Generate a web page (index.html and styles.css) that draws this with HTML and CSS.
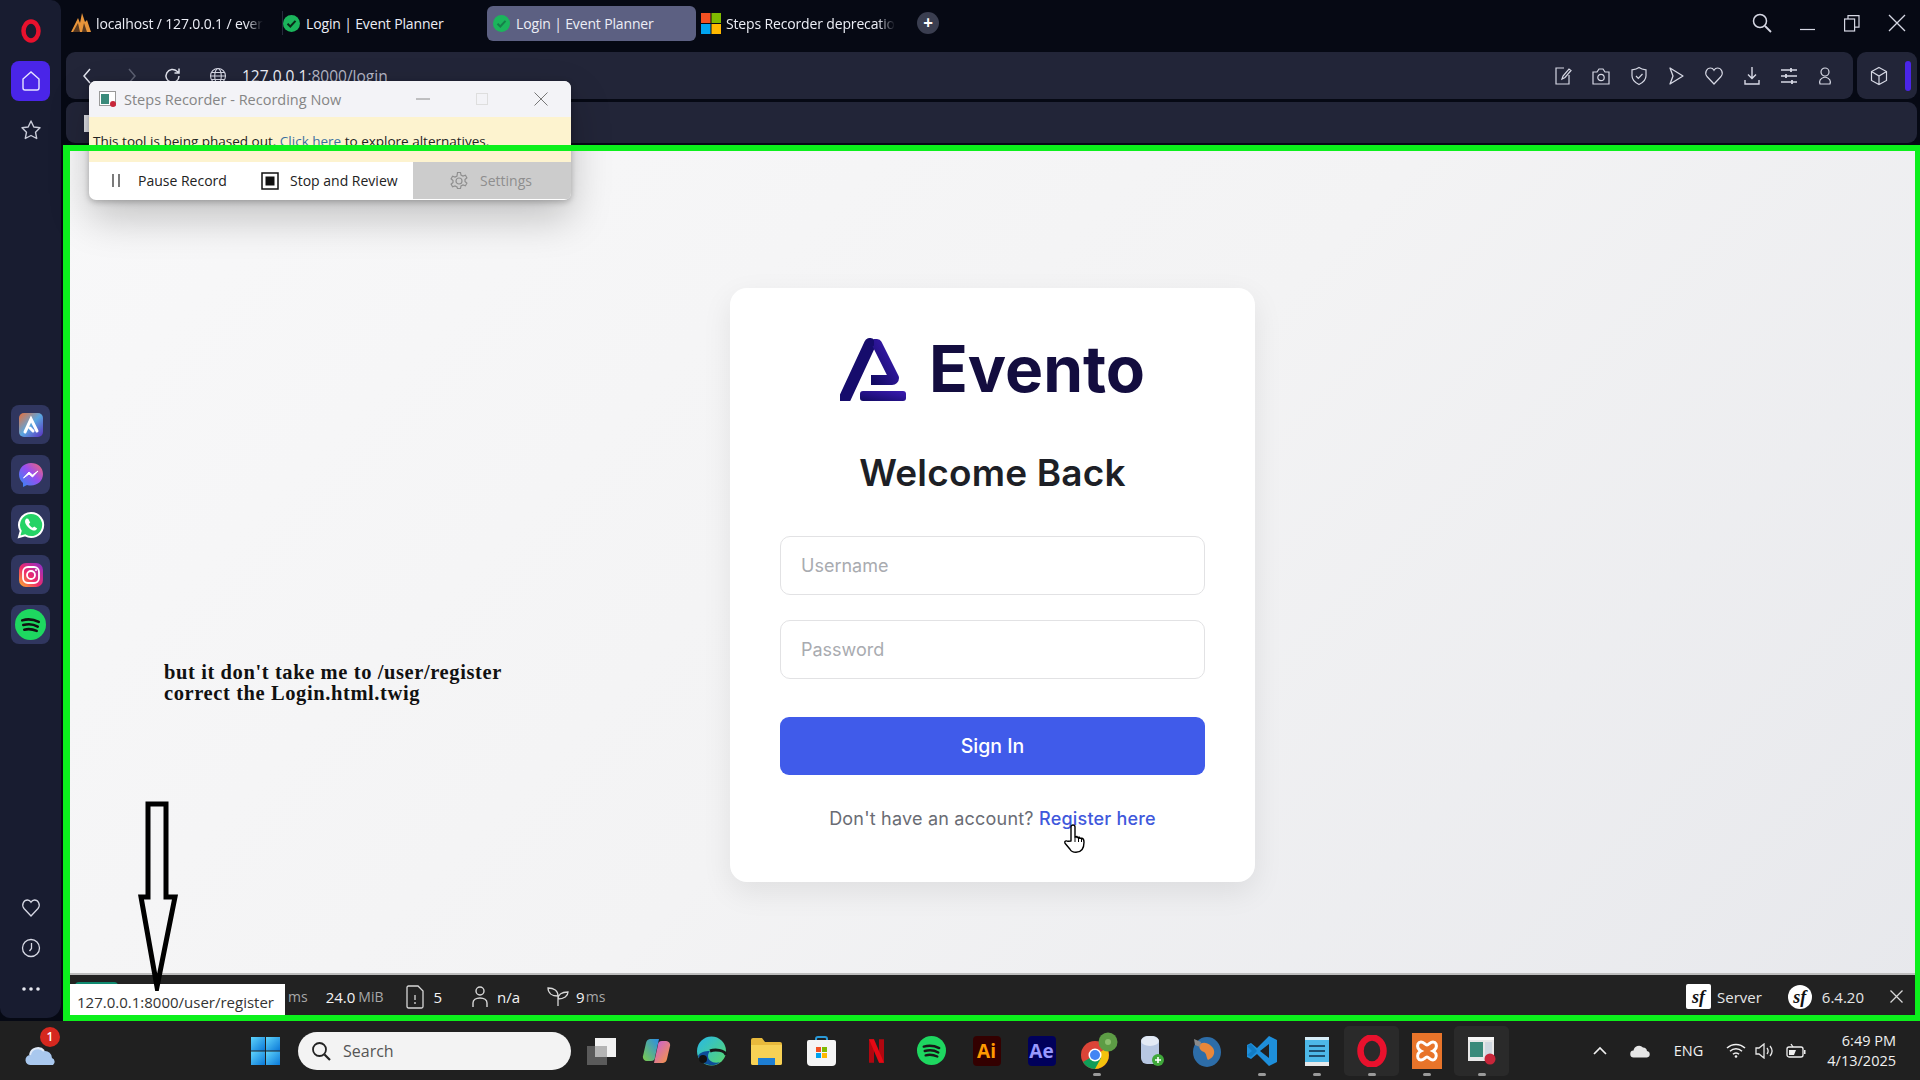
FILE: index.html
```
<!DOCTYPE html>
<html lang="en">
<head>
    <meta charset="UTF-8">
    <meta name="viewport" content="width=device-width, initial-scale=1.0">
    <title>Login | Event Planner</title>
    <link rel="stylesheet" href="styles.css">
</head>
<body>
<div class="screen">
    <div class="browser">
        <!-- opera sidebar -->
        <aside class="sidebar">
            <svg class="opera-logo" width="20" height="24" viewBox="0 0 20 24"><ellipse cx="10" cy="12" rx="7.5" ry="9.5" fill="none" stroke="#e8112d" stroke-width="4.5"/></svg>
            <div class="home-btn"><svg width="20" height="22" viewBox="0 0 20 22"><path d="M2 9 10 2l8 7v9a2 2 0 0 1-2 2H4a2 2 0 0 1-2-2z" fill="none" stroke="#e6e4ff" stroke-width="1.4"/></svg></div>
            <svg class="side-star" width="22" height="22" viewBox="0 0 22 22"><path d="M11 2l2.8 6 6.2.8-4.5 4.4 1.2 6.3L11 16.500 5.300 19.500l1.200-6.300L2 8.800 8.200 8z" fill="none" stroke="#c9cbd8" stroke-width="1.4" stroke-linejoin="round"/></svg>

            <div class="side-apps">
                <div class="app-tile">
                    <svg width="24" height="24" viewBox="0 0 24 24"><defs><linearGradient id="ariaG" x1="0" y1="0" x2="1" y2="1"><stop offset="0" stop-color="#e8703a"/><stop offset=".5" stop-color="#5aa7e0"/><stop offset="1" stop-color="#5a2fc0"/></linearGradient></defs><rect width="24" height="24" rx="5" fill="url(#ariaG)"/><path d="M6 19 12 6l6 12M11 15l3 3" fill="none" stroke="#fff" stroke-width="3" stroke-linecap="round"/></svg>
                </div>
                <div class="app-tile">
                    <svg width="28" height="28" viewBox="0 0 28 28"><defs><linearGradient id="msgG" x1="0" y1="1" x2="1" y2="0"><stop offset="0" stop-color="#2a8cf5"/><stop offset=".55" stop-color="#9a4df0"/><stop offset="1" stop-color="#f76a6a"/></linearGradient></defs><path d="M14 2C7 2 2 7 2 13.500c0 3.500 1.500 6.500 4 8.500v4l4-2c1.300.4 2.600.5 4 .5 7 0 12-5 12-11.500S21 2 14 2z" fill="url(#msgG)"/><path d="M6.500 17 12 11l3.500 3L21 10l-5.500 6-3.500-3z" fill="#fff" stroke="#fff" stroke-linejoin="round"/></svg>
                </div>
                <div class="app-tile">
                    <svg width="30" height="30" viewBox="0 0 30 30"><path d="M15 3a12 12 0 0 0-10.300 18L3 27l6.200-1.600A12 12 0 1 0 15 3z" fill="#25d366" stroke="#fff" stroke-width="2"/><path d="M10.500 8.500c-1.500 1-2 3-.8 5.500 1.500 3 4 5.200 6.800 6.300 2.200.8 4-.2 4.700-1.800l-3-2-1.500 1.300c-1.500-.7-3-2.200-3.800-3.800l1.300-1.500-2-3.800z" fill="#fff"/></svg>
                </div>
                <div class="app-tile">
                    <svg width="26" height="26" viewBox="0 0 26 26"><defs><linearGradient id="igG" x1="0" y1="1" x2="1" y2="0"><stop offset="0" stop-color="#fdb52c"/><stop offset=".45" stop-color="#ee2a6b"/><stop offset="1" stop-color="#8a2fd0"/></linearGradient></defs><rect x="1" y="1" width="24" height="24" rx="7" fill="url(#igG)"/><rect x="5" y="5" width="16" height="16" rx="5" fill="none" stroke="#fff" stroke-width="1.800"/><circle cx="13" cy="13" r="4" fill="none" stroke="#fff" stroke-width="1.800"/><circle cx="18" cy="8" r="1" fill="#fff"/></svg>
                </div>
                <div class="app-tile">
                    <svg width="31" height="31" viewBox="0 0 30 30"><circle cx="15" cy="15" r="15" fill="#1ed760"/><path d="M7 11c5-1.500 11-1 16 1.500M8 15.500c4.500-1.200 10-.8 14 1.500M9 20c4-1 8-.6 12 1.200" fill="none" stroke="#111" stroke-width="2.500" stroke-linecap="round"/></svg>
                </div>
            </div>

            <div class="side-bottom">
                <svg width="20" height="20" viewBox="0 0 20 20"><path d="M10 18 3 10.500C0 6.500 3 2 6.500 2 8 2 9.300 3 10 4.200 10.700 3 12 2 13.500 2 17 2 20 6.500 17 10.500z" fill="none" stroke="#d6d8e4" stroke-width="1.300"/></svg>
                <svg width="20" height="20" viewBox="0 0 20 20"><circle cx="10" cy="10" r="8.500" fill="none" stroke="#d6d8e4" stroke-width="1.300"/><path d="M10.500 5v5.500L8.500 13" fill="none" stroke="#d6d8e4" stroke-width="1.300"/></svg>
                <svg class="side-dots" width="18" height="4" viewBox="0 0 18 4"><circle cx="2" cy="2" r="1.800" fill="#e6e8f0"/><circle cx="9" cy="2" r="1.800" fill="#e6e8f0"/><circle cx="16" cy="2" r="1.800" fill="#e6e8f0"/></svg>
            </div>
        </aside>

        <div class="main">
            <div class="tabstrip">
                <div class="tab tab-pma">
                    <svg width="22" height="22" viewBox="0 0 22 22"><path d="M1 20 8 6l2 5 2-10 3 9 2-2 4 12z" fill="#e8953a"/><path d="M3 20 8 11l2 9zM12 20l2-9 3 9z" fill="#5a3a20"/></svg>
                    <span class="tab-text tab-fade">localhost / 127.0.0.1 / ever</span>
                </div>
                <div class="tab tab-login">
                    <svg width="17" height="17" viewBox="0 0 17 17"><circle cx="8.500" cy="8.500" r="8.500" fill="#1bb55c"/><path d="M4.500 8.800 7.300 11.500 12.500 5.800" fill="none" stroke="#0a2a18" stroke-width="2"/></svg>
                    <span class="tab-text">Login | Event Planner</span>
                </div>
                <div class="tab tab-active">
                    <svg width="17" height="17" viewBox="0 0 17 17"><circle cx="8.500" cy="8.500" r="8.500" fill="#1bb55c"/><path d="M4.500 8.800 7.300 11.500 12.500 5.800" fill="none" stroke="#16804a" stroke-width="2"/></svg>
                    <span class="tab-text">Login | Event Planner</span>
                </div>
                <div class="tab tab-steps">
                    <svg width="20" height="21" viewBox="0 0 20 21"><rect width="9.500" height="10" fill="#f25022"/><rect x="10.500" width="9.500" height="10" fill="#7fba00"/><rect y="11" width="9.500" height="10" fill="#00a4ef"/><rect x="10.500" y="11" width="9.500" height="10" fill="#ffb900"/></svg>
                    <span class="tab-text tab-fade">Steps Recorder deprecatio</span>
                </div>
                <div class="tab-add">+</div>
                <div class="win-controls">
                    <svg width="20" height="20" viewBox="0 0 20 20"><circle cx="8" cy="8" r="6.500" fill="none" stroke="#d6d8e4" stroke-width="1.500"/><path d="M13 13l6 6" stroke="#d6d8e4" stroke-width="1.800"/></svg>
                    <svg width="16" height="16" viewBox="0 0 16 16"><path d="M0 14.500h15" stroke="#d6d8e4" stroke-width="1.200"/></svg>
                    <svg width="16" height="17" viewBox="0 0 16 17"><rect x=".6" y="4" width="10" height="12" fill="none" stroke="#d6d8e4" stroke-width="1.200"/><path d="M4 4V.7h11v11.500h-4" fill="none" stroke="#d6d8e4" stroke-width="1.200"/></svg>
                    <svg width="18" height="18" viewBox="0 0 18 18"><path d="M1 1l16 16M17 1 1 17" stroke="#d6d8e4" stroke-width="1.300"/></svg>
                </div>
            </div>

            <div class="address-row">
                <div class="address-bar">
                    <svg class="nav-back" width="10" height="16" viewBox="0 0 10 16"><path d="M8 1 2 8l6 7" fill="none" stroke="#e0e2ec" stroke-width="1.500"/></svg>
                    <svg class="nav-fwd" width="10" height="16" viewBox="0 0 10 16"><path d="M2 1l6 7-6 7" fill="none" stroke="#5c6072" stroke-width="1.500"/></svg>
                    <svg class="nav-reload" width="18" height="18" viewBox="0 0 18 18"><path d="M15 9a6.500 6.500 0 1 1-2-4.700L15 6M15 1.500V6h-4.500" fill="none" stroke="#e0e2ec" stroke-width="1.500"/></svg>
                    <svg class="nav-globe" width="18" height="18" viewBox="0 0 18 18"><g fill="none" stroke="#d6d8e4" stroke-width="1.100"><circle cx="9" cy="9" r="7.500"/><ellipse cx="9" cy="9" rx="3.300" ry="7.500"/><path d="M1.500 9h15M2.500 5.500h13M2.500 12.500h13"/></g></svg>
                    <span class="url"><b>127.0.0.1</b>:8000/login</span>
                    <div class="addr-tools">
                        <svg width="18" height="20" viewBox="0 0 18 20"><path d="M10 2H2v16h13V9M8 13l1-3 6-7 2 1.500-6 7z" fill="none" stroke="#d6d8e4" stroke-width="1.200"/></svg>
                        <svg width="20" height="20" viewBox="0 0 20 20"><path d="M2 6h4l2-3h4l2 3h4v12H2z" fill="none" stroke="#d6d8e4" stroke-width="1.200"/><circle cx="10" cy="11.500" r="3.200" fill="none" stroke="#d6d8e4" stroke-width="1.200"/></svg>
                        <svg width="18" height="20" viewBox="0 0 18 20"><path d="M9 1.500c2 1.500 4 2 7 2.300v6c0 4-3 6.800-7 8.700-4-1.900-7-4.700-7-8.700v-6c3-.3 5-.8 7-2.300z" fill="none" stroke="#d6d8e4" stroke-width="1.200"/><path d="M6 10l2.300 2.300L12.500 8" fill="none" stroke="#d6d8e4" stroke-width="1.200"/></svg>
                        <svg width="18" height="20" viewBox="0 0 18 20"><path d="M3 2l13 8-13 8 3-8z" fill="none" stroke="#d6d8e4" stroke-width="1.300" stroke-linejoin="round"/></svg>
                        <svg width="20" height="20" viewBox="0 0 20 20"><path d="M10 18 3 10.500C0 6.500 3 2 6.500 2 8 2 9.300 3 10 4.200 10.700 3 12 2 13.500 2 17 2 20 6.500 17 10.500z" fill="none" stroke="#d6d8e4" stroke-width="1.200"/></svg>
                        <svg width="18" height="20" viewBox="0 0 18 20"><path d="M9 1v11M5 8.500 9 12.500l4-4M2 14v4h14v-4" fill="none" stroke="#d6d8e4" stroke-width="1.400"/></svg>
                        <svg width="18" height="18" viewBox="0 0 18 18"><path d="M1 3h16M1 9h16M1 15h16" stroke="#d6d8e4" stroke-width="1.300"/><path d="M11 1v4M6 7v4M12 13v4" stroke="#d6d8e4" stroke-width="1.800"/></svg>
                        <svg width="16" height="20" viewBox="0 0 16 20"><circle cx="8" cy="6" r="4" fill="none" stroke="#d6d8e4" stroke-width="1.200"/><path d="M3 18c-1-3 0-6 5-7 5 1 6 4 5 7z" fill="none" stroke="#d6d8e4" stroke-width="1.200"/></svg>
                    </div>
                </div>
                <div class="ext-box">
                    <svg width="18" height="20" viewBox="0 0 18 20"><path d="M9 1.500 16.500 5.500v9L9 18.500 1.500 14.500v-9zM1.500 5.500 9 10l7.500-4.500M9 10v8.500" fill="none" stroke="#d6d8e4" stroke-width="1.200"/></svg>
                    <span class="ext-bar"></span>
                </div>
            </div>

            <div class="bookmarks"><span class="bookmark-stub"></span></div>

            <div class="viewport">
                <div class="viewport-inner">
                    <div class="page">
                        <div class="card">
                            <div class="logo">
                                <svg width="66" height="63" viewBox="0 0 66 63">
                                    <defs><linearGradient id="logoG" x1="0" y1="1" x2="1" y2="0"><stop offset="0" stop-color="#120a62"/><stop offset="1" stop-color="#3b1bb3"/></linearGradient></defs>
                                    <path d="M5 60 30 6" fill="none" stroke="#160c6c" stroke-width="12" stroke-linecap="round"/>
                                    <path d="M34 6h3l17 34a2 2 0 0 1-2 2H31" fill="none" stroke="url(#logoG)" stroke-width="10" stroke-linejoin="round"/>
                                    <rect x="20" y="53" width="46" height="10" rx="3" fill="url(#logoG)"/>
                                </svg>
                                <span class="logo-name">Evento</span>
                            </div>
                            <h1 class="card-title">Welcome Back</h1>
                            <form class="login-form">
                                <input class="field" type="text" placeholder="Username">
                                <input class="field" type="password" placeholder="Password">
                                <button class="submit" type="button">Sign In</button>
                            </form>
                            <p class="register">Don't have an account? <a href="#">Register here</a></p>
                        </div>
                    </div>

                    <p class="note">but it don't take me to /user/register<br>correct the Login.html.twig</p>

                    <svg class="arrow" width="40" height="190" viewBox="0 0 40 190"><path d="M10 3h18v93h9L19 186 3 96h7z" fill="none" stroke="#000" stroke-width="5" stroke-miterlimit="10"/></svg>

                    <svg class="hand-cursor" width="24" height="30" viewBox="0 0 24 30"><path d="M8 17V3a2 2 0 0 1 4 0v10l2-.5 0 1 2.500-.2 0 1 2.500 0c2 .500 2 2 2 4 0 5-1 10-8 10-3 0-5-1-6-3l-5-6c-1-2 1-3 3-2z" fill="#fff" stroke="#000" stroke-width="1.400" stroke-linejoin="round"/><path d="M12 13v5M15.500 14v4M18.500 15v3" stroke="#000" stroke-width="1"/></svg>

                    <div class="sf-toolbar">
                        <span class="sf-tab"></span>
                        <span class="sf-item sf-ms"><small>ms</small></span>
                        <span class="sf-item sf-mem">24.0<small>MiB</small></span>
                        <span class="sf-item">
                            <svg width="18" height="24" viewBox="0 0 18 24"><path d="M1 2.500A1.500 1.500 0 0 1 2.500 1H12l5 5v15.500a1.500 1.500 0 0 1-1.500 1.500h-13A1.500 1.500 0 0 1 1 21.500z" fill="none" stroke="#d8d8d8" stroke-width="1.300"/><path d="M9 10v5M9 17v2" stroke="#d8d8d8" stroke-width="1.300"/></svg>
                            5
                        </span>
                        <span class="sf-item sf-user">
                            <svg width="16" height="22" viewBox="0 0 16 22"><circle cx="8" cy="5" r="4" fill="none" stroke="#d8d8d8" stroke-width="1.400"/><path d="M1 21v-4c0-3 3-5 7-5s7 2 7 5v4" fill="none" stroke="#d8d8d8" stroke-width="1.400"/></svg>
                            n/a
                        </span>
                        <span class="sf-item sf-time">
                            <svg width="22" height="20" viewBox="0 0 22 20"><path d="M11 19V9M11 9C11 4 7 1 1 1c0 5 4 8 10 8zM11 12c0-4 3-7 10-7 0 4-4 7-10 7z" fill="none" stroke="#d8d8d8" stroke-width="1.300"/></svg>
                            9<small>ms</small>
                        </span>
                        <div class="sf-right">
                            <span class="sf-item sf-item-tight"><span class="sf-logo sf-logo-square"><i>sf</i></span><em>Server</em></span>
                            <span class="sf-item sf-item-tight"><span class="sf-logo sf-logo-round"><i>sf</i></span><em>6.4.20</em></span>
                            <svg class="sf-close" width="13" height="13" viewBox="0 0 13 13"><path d="M.5.500l12 12M12.500.500l-12 12" stroke="#d8d8d8" stroke-width="1.300"/></svg>
                        </div>
                    </div>

                    <div class="status-link">127.0.0.1:8000/user/register</div>
                </div>
                <div class="frame"></div>
            </div>
        </div>
    </div>

    <!-- windows taskbar -->
    <footer class="taskbar">
        <div class="weather">
            <svg width="32" height="24" viewBox="0 0 32 24"><path d="M6 23a5 5 0 0 1-1-10 8 8 0 0 1 14-4 7 7 0 0 1 8 7 4 4 0 0 1 1 7z" fill="#a9c8ee"/><path d="M5 13a8 8 0 0 1 14-4" fill="none" stroke="#dfe9f7" stroke-width="2"/></svg>
            <span class="weather-badge">1</span>
        </div>
        <div class="task-btn">
            <svg width="29" height="28" viewBox="0 0 29 28"><defs><linearGradient id="winG" x1="0" y1="0" x2="1" y2="1"><stop offset="0" stop-color="#5fd4fb"/><stop offset="1" stop-color="#0a78d8"/></linearGradient></defs><rect width="14" height="13.500" fill="url(#winG)"/><rect x="15" width="14" height="13.500" fill="url(#winG)"/><rect y="14.500" width="14" height="13.500" fill="url(#winG)"/><rect x="15" y="14.500" width="14" height="13.500" fill="url(#winG)"/></svg>
        </div>
        <div class="search-pill">
            <svg width="20" height="20" viewBox="0 0 20 20"><circle cx="8.500" cy="8.500" r="6.500" fill="none" stroke="#222" stroke-width="1.800"/><path d="M13.500 13.500 19 19" stroke="#222" stroke-width="2.200"/></svg>
            <span>Search</span>
        </div>
        <div class="task-btn">
            <svg width="30" height="28" viewBox="0 0 30 28"><rect y="9" width="20" height="19" fill="#5a5a5a"/><rect x="8" y="1" width="21" height="19" fill="#f2f2f2"/><rect x="8" y="9" width="12" height="11" fill="#b4b4b4"/></svg>
        </div>
        <div class="task-btn">
            <svg width="29" height="28" viewBox="0 0 29 28"><defs><linearGradient id="copA" x1="0" y1="1" x2="1" y2="0"><stop offset="0" stop-color="#7ccb4a"/><stop offset="1" stop-color="#2a8ce8"/></linearGradient><linearGradient id="copB" x1="0" y1="0" x2="1" y2="1"><stop offset="0" stop-color="#c65ce0"/><stop offset="1" stop-color="#f79a3a"/></linearGradient></defs><path d="M8 2h9l-4 18a4 4 0 0 1-4 4H5a4 4 0 0 1-4-5l3-13a5 5 0 0 1 4-4z" fill="url(#copA)"/><path d="M21 26h-9l4-18a4 4 0 0 1 4-4h4a4 4 0 0 1 4 5l-3 13a5 5 0 0 1-4 4z" fill="url(#copB)"/></svg>
        </div>
        <div class="task-btn">
            <svg width="31" height="30" viewBox="0 0 31 30"><defs><linearGradient id="edgeG" x1="0" y1="0" x2="1" y2="1"><stop offset="0" stop-color="#27b8e8"/><stop offset="1" stop-color="#5bd86a"/></linearGradient></defs><circle cx="15.500" cy="15" r="14.500" fill="url(#edgeG)"/><path d="M2 20c3 7 10 10 16 9 3-.5 5-2 6-3-6 2-12-1-12-6 0-2 1-4 2-5-5 0-10 1-12 5z" fill="#0d4d98"/><circle cx="7" cy="23" r="4" fill="#111"/><path d="M14 15c5-2 15-1 16 4" fill="none" stroke="#181818" stroke-width="3"/></svg>
        </div>
        <div class="task-btn">
            <svg width="31" height="28" viewBox="0 0 31 28"><path d="M0 3a2 2 0 0 1 2-2h9l3 4h15a2 2 0 0 1 2 2v19a2 2 0 0 1-2 2H2a2 2 0 0 1-2-2z" fill="#e8b93c"/><path d="M0 8h31v18a2 2 0 0 1-2 2H2a2 2 0 0 1-2-2z" fill="#f7d155"/><rect x="7" y="21" width="17" height="7" fill="#1d7ed4"/></svg>
        </div>
        <div class="task-btn">
            <svg width="29" height="30" viewBox="0 0 29 30"><path d="M9 5V3a2 2 0 0 1 2-2h7a2 2 0 0 1 2 2v2" fill="none" stroke="#2a9ad8" stroke-width="2"/><path d="M0 6a2 2 0 0 1 2-2h25a2 2 0 0 1 2 2v20a4 4 0 0 1-4 4H4a4 4 0 0 1-4-4z" fill="#f5f5f5"/><rect x="9" y="11" width="5" height="5" fill="#f25022"/><rect x="15" y="11" width="5" height="5" fill="#7fba00"/><rect x="9" y="17" width="5" height="5" fill="#00a4ef"/><rect x="15" y="17" width="5" height="5" fill="#ffb900"/></svg>
        </div>
        <div class="task-btn">
            <svg width="15" height="26" viewBox="0 0 18 28"><path d="M0 0h6v28H0zM12 0h6v28h-6z" fill="#b00710"/><path d="M0 0h6l12 28h-6z" fill="#e50914"/></svg>
        </div>
        <div class="task-btn">
            <svg width="29" height="29" viewBox="0 0 30 30"><circle cx="15" cy="15" r="15" fill="#1ed760"/><path d="M7 11c5-1.500 11-1 16 1.500M8 15.500c4.500-1.200 10-.8 14 1.500M9 20c4-1 8-.6 12 1.200" fill="none" stroke="#181818" stroke-width="2.500" stroke-linecap="round"/></svg>
        </div>
        <div class="task-btn"><span class="app-square app-ai">Ai</span></div>
        <div class="task-btn"><span class="app-square app-ae">Ae</span></div>
        <div class="task-btn running">
            <svg class="chrome-icon" width="38" height="38" viewBox="0 0 38 38"><circle cx="15" cy="23" r="14" fill="#db4437"/><path d="M15 23 27 16a14 14 0 0 1-12 21z" fill="#f4c20d"/><path d="M15 23 3 30a14 14 0 0 0 12 7l6-11z" fill="#0f9d58"/><circle cx="15" cy="23" r="6.500" fill="#fff"/><circle cx="15" cy="23" r="5" fill="#4285f4"/><circle cx="28" cy="10" r="9.500" fill="#5d9c45"/><circle cx="28" cy="10" r="3" fill="#8cc06e"/></svg>
        </div>
        <div class="task-btn">
            <svg width="24" height="32" viewBox="0 0 24 32"><rect x="1" y="1" width="18" height="28" rx="6" fill="#b7c7e2"/><ellipse cx="10" cy="6" rx="9" ry="5" fill="#e3eaf5"/><circle cx="18" cy="25" r="6" fill="#3fa83a"/><path d="M18 22v6M15 25h6" stroke="#fff" stroke-width="1.600"/></svg>
        </div>
        <div class="task-btn">
            <svg width="29" height="32" viewBox="0 0 29 32"><ellipse cx="15" cy="17" rx="14" ry="15" fill="#2d6da8"/><path d="M8 9c5-3 10 0 13 4 3 5 0 10-5 12-2-3-1-6-4-8-3-1-6-4-4-8z" fill="#e8873a"/><path d="M2 4l7 3-1 5-5-2z" fill="#8a8a8a"/></svg>
        </div>
        <div class="task-btn running">
            <svg width="32" height="32" viewBox="0 0 32 32"><path d="M23 1l8 4v22l-8 4-12-12-6 5-4-2V10l4-2 6 5z" fill="#1e8fdb"/><path d="M23 9 14 16l9 7z" fill="#202020"/><path d="M1 11l4-2 6 7-6 6-4-2 5-4z" fill="#127cc4"/></svg>
        </div>
        <div class="task-btn running">
            <svg width="24" height="32" viewBox="0 0 24 32"><rect y="2" width="24" height="29" fill="#4db8e8"/><rect y="2" width="24" height="3" fill="#d8eef8"/><rect y="27" width="24" height="4" fill="#e8e8e8"/><path d="M4 11h16M4 16h16M4 21h16" stroke="#1f4f70" stroke-width="2"/></svg>
        </div>
        <div class="task-btn running active">
            <svg width="30" height="32" viewBox="0 0 30 32"><ellipse cx="15" cy="16" rx="11.500" ry="13.500" fill="none" stroke="#e8112d" stroke-width="6.500"/></svg>
        </div>
        <div class="task-btn running">
            <svg width="30" height="36" viewBox="0 0 30 36"><rect width="30" height="36" fill="#e8742a"/><path d="M9 9c3 0 4 3 6 3s3-3 6-3 4 3 3 6c-1 2-3 3-3 3s2 1 3 3c1 3-1 6-3 6-3 0-4-3-6-3s-3 3-6 3-4-3-3-6c1-2 3-3 3-3s-2-1-3-3c-1-3 0-6 3-6z" fill="none" stroke="#fff" stroke-width="3"/></svg>
        </div>
        <div class="task-btn running active">
            <svg width="28" height="28" viewBox="0 0 28 28"><rect width="26" height="24" fill="#e8e8e8"/><rect y="0" width="26" height="3" fill="#f8f8f8"/><rect x="2" y="5" width="13" height="15" fill="#3a8a7a"/><rect x="17" y="5" width="7" height="15" fill="#d0d8e0"/><circle cx="22" cy="22" r="5.500" fill="#c8263a"/></svg>
        </div>

        <div class="tray">
            <svg width="14" height="9" viewBox="0 0 14 9"><path d="M1 8l6-6 6 6" fill="none" stroke="#f0f0f0" stroke-width="1.700"/></svg>
            <svg width="21" height="15" viewBox="0 0 21 15"><path d="M4 14.500a3.500 3.500 0 0 1-.5-7A5.500 5.500 0 0 1 13 4.500a4 4 0 0 1 4 3.500 3.300 3.300 0 0 1 0 6.500z" fill="#e6e6e6"/></svg>
            <span>ENG</span>
            <svg width="20" height="15" viewBox="0 0 20 15"><path d="M1 5a13 13 0 0 1 18 0M4 8.300a8.500 8.500 0 0 1 12 0M7 11.300a4 4 0 0 1 6 0" fill="none" stroke="#f0f0f0" stroke-width="1.500"/><circle cx="10" cy="13.500" r="1.300" fill="#f0f0f0"/></svg>
            <svg class="tray-vol" width="20" height="16" viewBox="0 0 20 16"><path d="M1 5h3l5-4v14l-5-4H1zM12 5c1.500 2 1.500 4 0 6M15 3c2.500 3 2.500 7 0 10" fill="none" stroke="#e6e6e6" stroke-width="1.300"/></svg>
            <svg class="tray-batt" width="20" height="16" viewBox="0 0 20 16"><rect x="1" y="4" width="16" height="10" rx="2" fill="none" stroke="#f0f0f0" stroke-width="1.300"/><rect x="18" y="7" width="1.500" height="4" fill="#f0f0f0"/><path d="M3 12V7h7l-2 5z" fill="#f0f0f0"/><path d="M5 1l2 3" stroke="#f0f0f0" stroke-width="1.300"/></svg>
            <div class="clock"><span>6:49 PM</span><span>4/13/2025</span></div>
        </div>
    </footer>

    <!-- steps recorder window -->
    <div class="recorder">
        <div class="rec-title">
            <svg width="18" height="16" viewBox="0 0 18 16"><rect x=".5" y=".5" width="16" height="14" fill="#fff" stroke="#999"/><rect x="2" y="3" width="8" height="10" fill="#3a8a7a"/><circle cx="14" cy="13" r="3" fill="#c8263a"/></svg>
            <span class="rec-name">Steps Recorder - Recording Now</span>
            <div class="rec-controls">
                <svg width="14" height="2" viewBox="0 0 14 2"><path d="M0 1h14" stroke="#8a8a8a"/></svg>
                <svg width="12" height="12" viewBox="0 0 12 12"><rect x=".5" y=".5" width="11" height="11" fill="none" stroke="#dedede"/></svg>
                <svg width="14" height="14" viewBox="0 0 14 14"><path d="M.5.500l13 13M13.500.500l-13 13" stroke="#777"/></svg>
            </div>
        </div>
        <div class="rec-notice">This tool is being phased out. <a href="#">Click here</a> to explore alternatives.</div>
        <div class="rec-actions">
            <div class="rec-btn rec-pause">
                <svg width="8" height="13" viewBox="0 0 8 13"><path d="M1 0v13M7 0v13" stroke="#333" stroke-width="1.300"/></svg>
                <span>Pause Record</span>
            </div>
            <div class="rec-btn rec-stop">
                <svg width="18" height="18" viewBox="0 0 18 18"><rect x="1" y="1" width="16" height="16" fill="#fff" stroke="#111" stroke-width="1.500"/><rect x="4.500" y="4.500" width="9" height="9" fill="#111"/></svg>
                <span>Stop and Review</span>
            </div>
            <div class="rec-btn rec-settings">
                <svg width="20" height="20" viewBox="0 0 20 20"><circle cx="10" cy="10" r="3" fill="none" stroke="#8f8f8f" stroke-width="1.200"/><path d="M8.500 1.500h3l.5 2.500 2 1 2.400-.8 1.500 2.600-1.900 1.700v2l1.900 1.700-1.500 2.600-2.400-.8-2 1-.5 2.500h-3L8 16l-2-1-2.400.8-1.500-2.600L4 11.500v-2L2.100 7.800l1.500-2.600L6 6l2-1z" fill="none" stroke="#8f8f8f" stroke-width="1.200"/></svg>
                <span>Settings</span>
            </div>
        </div>
    </div>
</div>
</body>
</html>
```

FILE: styles.css
```
* { box-sizing: border-box; }
html, body { margin: 0; height: 100%; overflow: hidden; }
body { font-family: "Open Sans", sans-serif; background: #060914; }
svg { display: block; flex: none; }

.screen { position: relative; width: 1920px; height: 1080px; display: flex; flex-direction: column; }
.browser { flex: 1; display: flex; min-height: 0; }

/* sidebar */
.sidebar { width: 61px; margin: 0 2px 3px 0; background: #181c30; border-radius: 0 10px 14px 10px; display: flex; flex-direction: column; align-items: center; padding-top: 19px; }
.home-btn { width: 39px; height: 40px; margin-top: 18px; border-radius: 8px; background: #4a25e8; display: flex; align-items: center; justify-content: center; }
.side-star { margin-top: 18px; }
.side-apps { margin-top: 264px; display: flex; flex-direction: column; gap: 11px; }
.app-tile { width: 39px; height: 39px; border-radius: 8px; background: #30365f; display: flex; align-items: center; justify-content: center; }
.side-bottom { margin-top: auto; padding-bottom: 27px; display: flex; flex-direction: column; align-items: center; gap: 20px; }
.side-dots { margin-top: 9px; }

.main { flex: 1; min-width: 0; display: flex; flex-direction: column; }

/* tabs */
.tabstrip { height: 52px; display: flex; align-items: center; padding: 0 0 6px 7px; font-size: 14px; letter-spacing: -.15px; color: #eceef6; }
.tab { display: flex; align-items: center; height: 35px; flex: none; }
.tab-text { white-space: nowrap; }
.tab-fade { -webkit-mask-image: linear-gradient(90deg, #000 90%, transparent); mask-image: linear-gradient(90deg, #000 90%, transparent); }
.tab-pma { width: 213px; gap: 4px; border-right: 1px solid #262a3c; height: 24px; }
.tab-login { width: 204px; gap: 6px; }
.tab-active { width: 209px; gap: 6px; padding-left: 6px; background: #5c6082; border-radius: 6px; }
.tab-steps { width: 216px; gap: 5px; padding-left: 5px; }
.tab-add { width: 22px; height: 22px; margin-left: 5px; border-radius: 50%; background: #3a3e50; color: #fff; font-weight: 700; font-size: 17px; line-height: 21px; text-align: center; }
.win-controls { margin-left: auto; padding-right: 14px; display: flex; align-items: center; gap: 28px; }

/* address bar */
.address-row { display: flex; gap: 4px; height: 47px; margin: 0 3px 3px 3px; }
.address-bar { flex: 1; display: flex; align-items: center; background: #222538; border-radius: 9px; padding-left: 16px; color: #b4b6c4; font-size: 15.5px; }
.nav-fwd { margin-left: 35px; }
.nav-reload { margin-left: 27px; }
.nav-globe { margin-left: 27px; }
.url { margin-left: 15px; }
.url b { font-weight: 400; color: #eceef6; }
.addr-tools { margin-left: auto; padding-right: 20px; display: flex; align-items: center; gap: 19px; }
.ext-box { width: 60px; background: #222538; border-radius: 9px; display: flex; align-items: center; padding-left: 13px; gap: 17px; }
.ext-bar { width: 6px; height: 30px; border-radius: 3px; background: #4a25e8; }
.bookmarks { height: 41px; margin: 0 3px 2px 3px; background: #222538; border-radius: 9px; padding: 13px 0 0 18px; }
.bookmark-stub { display: block; width: 6px; height: 17px; background: #dfe0e6; }

/* page inside the green frame */
.viewport { position: relative; flex: 1; min-height: 0; padding: 6px 5px 6px 7px; }
.frame { position: absolute; inset: 0; z-index: 6; border: solid #0cf01c; border-width: 6px 5px 6px 7px; pointer-events: none; }
.viewport-inner { position: relative; height: 100%; overflow: hidden; }
.page { height: 100%; padding-top: 3px; display: flex; align-items: center; justify-content: center; background: linear-gradient(135deg, #f8f8f9 0%, #f3f3f4 50%, #e7e8ec 100%); }

.card { width: 525px; height: 594px; background: #fff; border-radius: 17px; padding: 50px; box-shadow: 0 10px 30px rgba(0,0,0,.08); }
.logo { display: flex; align-items: flex-end; justify-content: center; gap: 23px; height: 63px; }
.logo-name { font-family: Inter, sans-serif; font-weight: 700; font-size: 64px; line-height: 63px; color: #130d3f; margin-bottom: 1px; }
.card-title { margin: 51px 0 0; font-family: Inter, sans-serif; font-size: 37px; font-weight: 600; line-height: 42px; letter-spacing: .2px; text-align: center; color: #1d1f26; }
.login-form { margin-top: 42px; display: flex; flex-direction: column; }
.field { height: 59px; padding: 0 20px; border: 1px solid #e2e2e4; border-radius: 10px; background: #fff; font-family: Inter, sans-serif; font-size: 18px; margin-bottom: 25px; }
.field::placeholder { color: #a9abb0; }
.submit { height: 58px; margin-top: 13px; border: none; border-radius: 9px; background: #405bea; color: #fff; font-family: Inter, sans-serif; font-size: 19.500px; font-weight: 500; }
.register { margin: 31px 0 0; font-family: Inter, sans-serif; font-size: 18px; line-height: 26px; letter-spacing: .2px; text-align: center; color: #6a6c74; }
.register a { color: #4058dc; font-weight: 500; text-decoration: none; }

/* annotations drawn on the capture */
.note { position: absolute; left: 94px; top: 511px; margin: 0; font-family: "Liberation Serif", serif; font-weight: 700; font-size: 20.500px; line-height: 21px; letter-spacing: .6px; color: #111; }
.arrow { position: absolute; left: 68px; top: 650px; z-index: 3; }
.hand-cursor { position: absolute; left: 993px; top: 673px; }

/* symfony toolbar */
.sf-toolbar { position: absolute; left: 0; right: 0; bottom: 0; height: 42px; border-top: 2px solid #bdbdbd; background: #222; display: flex; align-items: center; padding: 3px 0 0 218px; gap: 23px; color: #f4f4f4; font-size: 15px; }
.sf-tab { position: absolute; left: 5px; top: 7px; width: 43px; height: 4px; border-radius: 4px 4px 0 0; background: #0f8a70; }
.sf-item { display: flex; align-items: center; gap: 9px; line-height: 22px; }
.sf-item small { margin-left: -6px; font-size: 14px; color: #a8a8a8; }
.sf-ms small { margin-left: 0; }
.sf-mem { margin-left: -5px; }
.sf-user { margin-left: 7px; }
.sf-time { margin-left: 4px; gap: 7px; }
.sf-right { margin-left: auto; padding-right: 12px; display: flex; align-items: center; }
.sf-item-tight { margin-right: 26px; gap: 6px; }
.sf-item-tight em { font-style: normal; color: #e6e6e6; }
.sf-logo { width: 25px; height: 25px; background: #fff; color: #111; display: flex; align-items: center; justify-content: center; }
.sf-logo i { font-family: "Liberation Serif", serif; font-weight: 700; font-size: 18px; }
.sf-logo-square { border-radius: 2px; }
.sf-logo-round { border-radius: 50%; width: 24px; height: 24px; margin-right: 4px; }
.status-link { position: absolute; left: 0; bottom: 0; width: 215px; height: 31px; padding: 7px 0 0 7px; background: #fff; color: #333; font-size: 15px; line-height: 22px; white-space: nowrap; z-index: 2; }

/* taskbar */
.taskbar { height: 59px; flex: none; background: #202020; display: flex; align-items: center; padding-left: 25px; }
.weather { position: relative; width: 31px; margin-right: 182px; padding-top: 7px; }
.weather-badge { position: absolute; left: 15px; top: -8px; width: 20px; height: 20px; border-radius: 50%; background: #d6281f; color: #fff; font-size: 12px; font-weight: 600; line-height: 20px; text-align: center; }
.task-btn { position: relative; width: 55px; height: 50px; flex: none; display: flex; align-items: center; justify-content: center; }
.task-btn.running::after { content: ""; position: absolute; left: 50%; bottom: 0; width: 8px; height: 3px; margin-left: -4px; border-radius: 2px; background: #9a9a9a; }
.task-btn.active { background: #2a2a2a; border-radius: 5px; }
.chrome-icon { margin-left: 5px; }
.search-pill { width: 273px; height: 38px; margin: 0 3px 0 5px; border-radius: 19px; background: #f3f3f3; display: flex; align-items: center; gap: 12px; padding-left: 13px; font-size: 16px; color: #555; flex: none; }
.app-square { width: 28px; height: 30px; border-radius: 4px; font-weight: 700; font-size: 19px; line-height: 30px; text-align: center; }
.app-ai { background: #330000; color: #ff9a00; }
.app-ae { background: #00005b; color: #9999ff; }
.tray { margin-left: auto; padding-right: 24px; display: flex; align-items: center; color: #f0f0f0; font-size: 14.5px; gap: 23px; }
.tray-vol { margin-left: -14px; }
.tray-batt { margin-left: -12px; }
.clock { display: flex; flex-direction: column; align-items: flex-end; line-height: 20px; margin-left: -2px; }

/* steps recorder */
.recorder { position: absolute; left: 89px; top: 81px; width: 482px; height: 119px; border-radius: 7px; overflow: hidden; background: #fff; box-shadow: 0 18px 40px rgba(0,0,0,.22), 0 2px 6px rgba(0,0,0,.25); font-size: 14px; color: #222; z-index: 4; }
.rec-title { height: 36px; background: #f3f3f7; display: flex; align-items: center; padding-left: 10px; color: #858585; gap: 7px; font-size: 14.500px; }
.rec-controls { margin-left: auto; padding-right: 23px; display: flex; align-items: center; gap: 46px; }
.rec-notice { height: 45px; padding: 14px 0 0 4px; background: #fdf3cf; font-size: 13.5px; line-height: 20px; white-space: nowrap; }
.rec-notice a { color: #3b6f9f; text-decoration: none; }
.rec-actions { height: 38px; padding-bottom: 1px; display: flex; align-items: center; }
.rec-btn { height: 100%; display: flex; align-items: center; }
.rec-pause { width: 150px; padding-left: 23px; gap: 18px; }
.rec-stop { width: 174px; padding-left: 22px; gap: 11px; }
.rec-settings { flex: 1; padding-left: 36px; gap: 11px; background: #cccccc; color: #8e8e8e; }
```
